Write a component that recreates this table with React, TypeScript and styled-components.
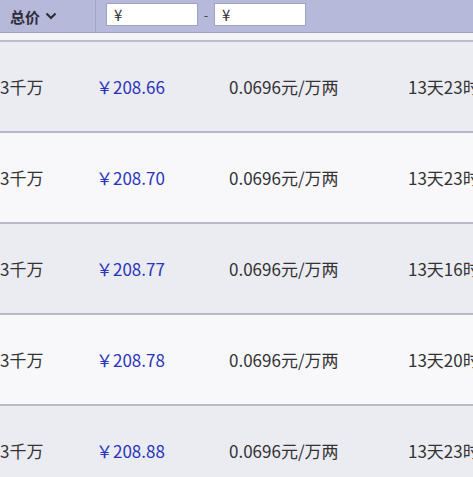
import React from "react";
import styled, { createGlobalStyle } from "styled-components";

const Global = createGlobalStyle`
  html, body { margin: 0; padding: 0; background: #f7f7fa; overflow: hidden; }
  body { font-family: "Noto Sans CJK SC", "Noto Sans", sans-serif; width: 473px; height: 477px; }
`;

const Page = styled.div`
  width: 473px;
  height: 477px;
  overflow: hidden;
  display: flex;
  flex-direction: column;
`;

const Header = styled.div`
  height: 32px;
  flex: none;
  background: #b6b9d9;
  display: flex;
  align-items: center;
  border-bottom: 1px solid #a0a2c2;
`;

const SortCell = styled.div`
  width: 96px;
  height: 100%;
  box-sizing: border-box;
  display: flex;
  align-items: center;
  gap: 5px;
  padding-left: 10px;
  border-right: 1px solid #a4a7c8;
  font-size: 15px;
  font-weight: 700;
  color: #2e2e3a;
`;

const FilterCell = styled.div`
  display: flex;
  align-items: center;
  padding-left: 10px;
  padding-bottom: 3px;
`;

const PriceInput = styled.div`
  width: 92px;
  height: 23px;
  box-sizing: border-box;
  background: #fff;
  border: 1px solid #9fa2c0;
  font-size: 15px;
  color: #333;
  display: flex;
  align-items: center;
  padding-left: 7px;
`;

const Dash = styled.span`
  width: 16px;
  text-align: center;
  font-size: 13px;
  color: #444;
`;

const HeaderGap = styled.div`
  height: 7px;
  flex: none;
  background: #f3f3f8;
  border-bottom: 2px solid #bcbccb;
`;

const Row = styled.div<{ $alt?: boolean }>`
  height: 91px;
  flex: none;
  box-sizing: border-box;
  background: ${(p) => (p.$alt ? "#f8f8fb" : "#ebebf2")};
  border-bottom: 2px solid #b9b9c9;
  display: flex;
  align-items: center;
  font-size: 17px;
  color: #333;
  white-space: nowrap;
`;

const Volume = styled.div`
  width: 96px;
  flex: none;
`;

const Price = styled.div`
  width: 133px;
  flex: none;
  color: #2a35bb;
`;

const Unit = styled.div`
  width: 179px;
  flex: none;
`;

const Time = styled.div`
  flex: none;
`;

const Chevron = () => (
  <svg width="12" height="8" viewBox="0 0 12 8">
    <path d="M1.5 1.5 L6 6 L10.5 1.5" fill="none" stroke="#2e2e3a" strokeWidth="2.2" />
  </svg>
);

const rows = [
  { p: "208.66", t: "13天23时" },
  { p: "208.70", t: "13天23时" },
  { p: "208.77", t: "13天16时" },
  { p: "208.78", t: "13天20时" },
  { p: "208.88", t: "13天23时" },
];

export default function App() {
  return (
    <Page>
      <Global />
      <Header>
        <SortCell>
          总价 <Chevron />
        </SortCell>
        <FilterCell>
          <PriceInput>¥</PriceInput>
          <Dash>-</Dash>
          <PriceInput>¥</PriceInput>
        </FilterCell>
      </Header>
      <HeaderGap />
      {rows.map((r, i) => (
        <Row key={i} $alt={i % 2 === 1}>
          <Volume>3千万</Volume>
          <Price>￥{r.p}</Price>
          <Unit>0.0696元/万两</Unit>
          <Time>{r.t}</Time>
        </Row>
      ))}
    </Page>
  );
}
